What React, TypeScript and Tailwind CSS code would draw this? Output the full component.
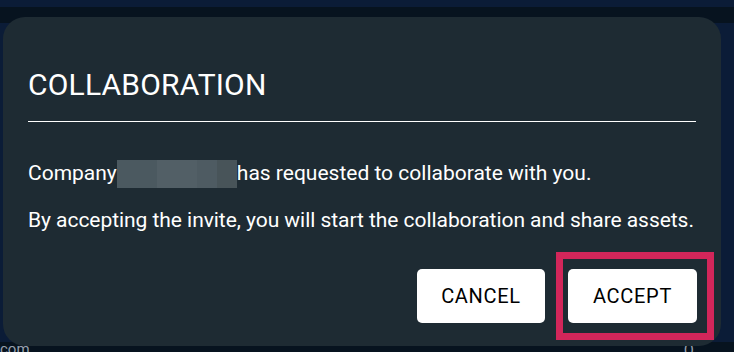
import React from 'react';

export default function App() {
  return (
    <div
      className="relative h-[352px] w-[734px] overflow-hidden bg-[#0b1c37]"
      style={{ fontFamily: 'Roboto, "Liberation Sans", sans-serif' }}
    >
      {/* page behind the modal */}
      <div className="mt-[7px] h-[16px] w-full bg-[#07131f]" />
      <div className="absolute bottom-0 left-0 flex h-[10px] w-full items-end justify-between bg-[#07131f] text-[15px] leading-none text-gray-400">
        <span className="-mb-[5px]">com</span>
        <span className="-mb-[5px] mr-[40px]">()</span>
      </div>

      {/* modal */}
      <div className="absolute left-[3px] top-[17px] flex h-[329px] w-[718px] flex-col rounded-[22px] bg-[#1e2b33] px-[25px]">
        <h2 className="mt-[51px] text-[30px] font-normal leading-[34px] tracking-[0.2px] text-white">COLLABORATION</h2>
        <div className="mt-[19px] h-px w-full bg-white" />

        <div className="mt-[38px] flex h-[28px] items-center text-[21px] text-white">
          <span>Company</span>
          <span className="flex h-[28px] w-[120px] shrink-0">
            <span className="w-[40px] bg-[#4b5960]" />
            <span className="w-[40px] bg-[#525f66]" />
            <span className="w-[20px] bg-[#4e5b62]" />
            <span className="w-[20px] bg-[#485459]" />
          </span>
          <span>has requested to collaborate with you.</span>
        </div>
        <p className="mt-[20px] whitespace-nowrap text-[21px] leading-[24px] tracking-[-0.05px] text-white">
          By accepting the invite, you will start the collaboration and share assets.
        </p>

        <div className="-mr-[1px] mt-[37px] flex justify-end gap-[23px]">
          <button className="h-[54px] w-[128px] rounded-[5px] bg-white text-[20px] tracking-[0.7px] text-black">CANCEL</button>
          <button className="h-[54px] w-[129px] rounded-[5px] bg-white text-[20px] tracking-[0.7px] text-black">ACCEPT</button>
        </div>
      </div>

      {/* highlight */}
      <div className="absolute left-[556px] top-[252px] h-[88px] w-[158px] border-[7px] border-[#d2265a]" />
    </div>
  );
}
